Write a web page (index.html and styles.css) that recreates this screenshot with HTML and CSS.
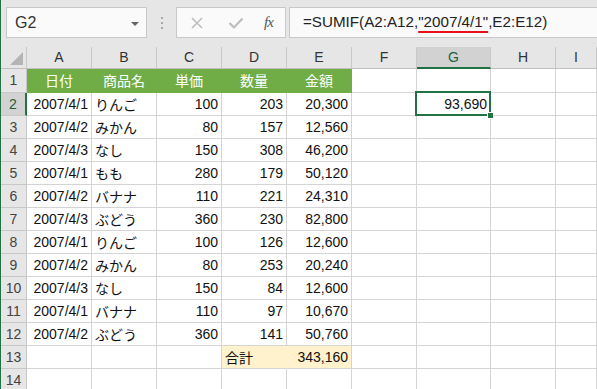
FILE: index.html
```html
<!DOCTYPE html>
<html lang="ja">
<head>
    <meta charset="UTF-8">
    <title>SUMIF</title>
    <link rel="stylesheet" href="styles.css">
</head>
<body>
    <div class="window">
        <div class="toolbar">
            <div class="namebox">
                <span>G2</span>
                <span class="arrow"></span>
            </div>
            <div class="grip"><i></i><i></i><i></i></div>
            <div class="fbuttons">
                <svg width="14" height="14" viewBox="0 0 14 14"><path d="M2 2 L12 12 M12 2 L2 12" stroke="#bdbdbd" stroke-width="1.6" fill="none"/></svg>
                <svg width="16" height="14" viewBox="0 0 16 14"><path d="M1.5 7 L6 11.5 L14.5 2.5" stroke="#bdbdbd" stroke-width="2.2" fill="none"/></svg>
                <span class="fx">fx</span>
            </div>
            <div class="formula">=SUMIF(A2:A12,<span class="squiggle">"2007/4/1"</span>,E2:E12)</div>
        </div>

        <div class="sheet" id="sheet">
            <div class="row head">
                <div class="corner"><span class="tri"></span></div>
                <div>A</div><div>B</div><div>C</div><div>D</div><div>E</div>
                <div>F</div><div class="sel">G</div><div>H</div><div>I</div>
            </div>
        </div>
    </div>

    <script>
        const data = [
            ["2007/4/1", "りんご", "100", "203", "20,300"],
            ["2007/4/2", "みかん", "80", "157", "12,560"],
            ["2007/4/3", "なし", "150", "308", "46,200"],
            ["2007/4/1", "もも", "280", "179", "50,120"],
            ["2007/4/2", "バナナ", "110", "221", "24,310"],
            ["2007/4/3", "ぶどう", "360", "230", "82,800"],
            ["2007/4/1", "りんご", "100", "126", "12,600"],
            ["2007/4/2", "みかん", "80", "253", "20,240"],
            ["2007/4/3", "なし", "150", "84", "12,600"],
            ["2007/4/1", "バナナ", "110", "97", "10,670"],
            ["2007/4/2", "ぶどう", "360", "141", "50,760"]
        ];
        const titles = ["日付", "商品名", "単価", "数量", "金額"];
        const sheet = document.getElementById("sheet");

        function addRow(num, cells, cls) {
            const row = document.createElement("div");
            row.className = "row" + (cls ? " " + cls : "");
            const rh = document.createElement("div");
            rh.className = "rh" + (num === 2 ? " sel" : "");
            rh.innerText = num;
            row.appendChild(rh);
            for (let i = 0; i < 9; i++) {
                const c = document.createElement("div");
                const cell = cells[i] || {};
                c.className = "cell " + (cell.cls || "");
                c.innerText = cell.text || "";
                row.appendChild(c);
            }
            sheet.appendChild(row);
            return row;
        }

        addRow(1, titles.map(t => ({ text: t, cls: "title" })), "first");

        data.forEach((d, i) => {
            const cells = [
                { text: d[0], cls: "num" },
                { text: d[1], cls: "jp" },
                { text: d[2], cls: "num" },
                { text: d[3], cls: "num" },
                { text: d[4], cls: "num" }
            ];
            if (i === 0) {
                cells[5] = {};
                cells[6] = { text: "93,690", cls: "num active" };
            }
            addRow(i + 2, cells);
        });

        addRow(13, [{}, {}, {}, { text: "合計", cls: "jp total" }, { text: "343,160", cls: "num total" }]);
        addRow(14, []);

        const active = document.querySelector(".active");
        const box = document.createElement("span");
        box.className = "cursor";
        box.innerHTML = '<span class="handle"></span>';
        active.appendChild(box);
    </script>
</body>
</html>
```

FILE: styles.css
```css
body {
    margin: 0;
    font-family: "Liberation Sans", "Noto Sans CJK JP", sans-serif;
    background: #fff;
    overflow: hidden;
}

.window {
    border-left: 1px solid #217346;
    height: 389px;
    overflow: hidden;
}

.toolbar {
    height: 47px;
    background: #e6e6e6;
    display: flex;
    align-items: flex-start;
    padding-top: 7px;
    box-sizing: border-box;
}

.namebox {
    margin-left: 5px;
    width: 141px;
    height: 31px;
    box-sizing: border-box;
    background: #fafafa;
    border: 1px solid #c8c8c8;
    display: flex;
    align-items: center;
    justify-content: space-between;
    padding: 0 7px 0 8px;
    font-size: 16px;
    color: #333;
}

.arrow {
    width: 0;
    height: 0;
    border-left: 4px solid transparent;
    border-right: 4px solid transparent;
    border-top: 4px solid #666;
    margin-top: 2px;
}

.grip {
    width: 2px;
    margin: 10px 13px 0 14px;
    display: flex;
    flex-direction: column;
    gap: 3px;
}

.grip i {
    width: 2px;
    height: 2px;
    background: #a8a8a8;
}

.fbuttons {
    width: 110px;
    height: 31px;
    box-sizing: border-box;
    background: #fafafa;
    border: 1px solid #c8c8c8;
    display: flex;
    align-items: center;
    padding: 0 0 0 13px;
    gap: 0;
}

.fbuttons svg:first-child {
    margin-right: 24px;
}

.fbuttons svg:nth-child(2) {
    margin-right: 20px;
}

.fx {
    font-family: "Liberation Serif", serif;
    font-style: italic;
    font-size: 15px;
    color: #555;
    letter-spacing: -1px;
}

.formula {
    margin-left: 3px;
    flex: 1;
    height: 31px;
    box-sizing: border-box;
    background: #fafafa;
    border: 1px solid #c8c8c8;
    border-right: none;
    padding: 5px 0 0 13px;
    font-size: 15.2px;
    color: #222;
    white-space: nowrap;
}

.squiggle {
    text-decoration: underline;
    text-decoration-color: #e8101a;
    text-decoration-thickness: 1.5px;
    text-underline-offset: 4px;
}

.row {
    display: grid;
    grid-template-columns: 26px 65px 65px 65px 65px 65px 65px 74px 65px 1fr;
    height: 23px;
}

.row > div {
    box-sizing: border-box;
    border-right: 1px solid #d4d4d4;
    border-bottom: 1px solid #d4d4d4;
    font-size: 14px;
    line-height: 22px;
    white-space: nowrap;
    overflow: hidden;
}

.row.head {
    height: 22px;
    background: #e6e6e6;
}

.row.first {
    height: 24px;
}

.row.first > div {
    line-height: 23px;
}

.row.head > div {
    border-right-color: #c8c8c8;
    border-bottom-color: #c0c0c0;
    text-align: center;
    color: #333;
    line-height: 21px;
}

.row.head > div.sel {
    background: #d2d2d2;
    border-bottom: 2px solid #217346;
    color: #1f5f3a;
}

.corner {
    position: relative;
}

.tri {
    position: absolute;
    right: 3px;
    bottom: 3px;
    width: 0;
    height: 0;
    border-left: 13px solid transparent;
    border-bottom: 13px solid #b4b4b4;
}

.row > .rh {
    background: #e6e6e6;
    text-align: center;
    color: #444;
    border-right-color: #c8c8c8;
    border-bottom-color: #c8c8c8;
    font-size: 14px;
}

.row > .rh.sel {
    background: #d2d2d2;
    border-right: 2px solid #217346;
    color: #1f5f3a;
}

.cell {
    padding: 0 3px;
    color: #111;
}

.cell.num {
    text-align: right;
}

.cell.jp {
    font-family: "Noto Sans CJK JP", sans-serif;
    font-size: 14px;
}

.row > .cell.title {
    background: #70ad47;
    color: #fff;
    text-align: center;
    border-color: #70ad47;
    font-family: "Noto Sans CJK JP", sans-serif;
}

.row > .cell.total {
    background: #fff2cc;
    border-right-color: #fff2cc;
}

.row > .cell.total.num {
    border-right-color: #d4d4d4;
}

.row > .cell.active {
    overflow: visible;
    position: relative;
}

.cursor {
    position: absolute;
    left: -2px;
    top: -2px;
    right: -1px;
    bottom: -1px;
    border: 2px solid #217346;
}

.handle {
    position: absolute;
    right: -5px;
    bottom: -5px;
    width: 5px;
    height: 5px;
    background: #217346;
    border: 1px solid #fff;
}
```
